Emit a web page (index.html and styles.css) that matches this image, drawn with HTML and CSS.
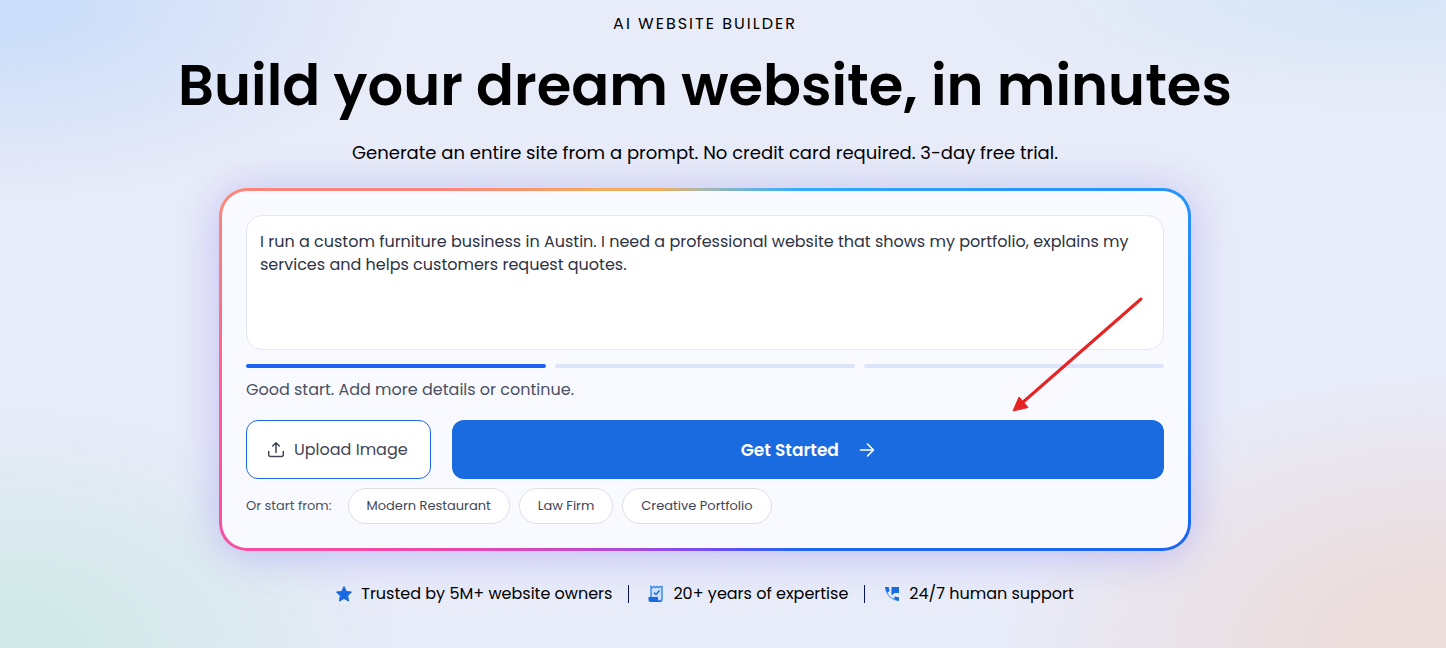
FILE: index.html
```
<!DOCTYPE html>
<html lang="en">
<head>
    <meta charset="UTF-8">
    <meta name="viewport" content="width=device-width, initial-scale=1.0">
    <title>AI Website Builder</title>
    <link rel="stylesheet" href="styles.css">
</head>
<body>
    <main class="hero">
        <p class="eyebrow">AI WEBSITE BUILDER</p>
        <h1>Build your dream website, in minutes</h1>
        <p class="subtitle">Generate an entire site from a prompt. No credit card required. 3-day free trial.</p>

        <form class="card">
            <textarea class="prompt" aria-label="Describe your website">I run a custom furniture business in Austin. I need a professional website that shows my portfolio, explains my services and helps customers request quotes.</textarea>

            <div class="progress">
                <span class="step active"></span>
                <span class="step"></span>
                <span class="step"></span>
            </div>
            <p class="hint">Good start. Add more details or continue.</p>

            <div class="actions">
                <button type="button" class="upload">
                    <svg width="18" height="18" viewBox="0 0 18 18" fill="none" stroke="currentColor" stroke-width="1.5" stroke-linecap="round" stroke-linejoin="round">
                        <path d="M9 11.500V2M5.700 5L9 1.700l3.300 3.300M1.700 10.500v3.300a1.700 1.700 0 0 0 1.700 1.700h11.200a1.700 1.700 0 0 0 1.700-1.700v-3.300"/>
                    </svg>
                    Upload Image
                </button>
                <button type="submit" class="submit">
                    Get Started
                    <svg width="16" height="16" viewBox="0 0 16 16" fill="none" stroke="currentColor" stroke-width="1.6" stroke-linecap="round" stroke-linejoin="round">
                        <path d="M1.500 8h13M8.500 2l6 6-6 6"/>
                    </svg>
                </button>
            </div>

            <div class="examples">
                <span class="examples-label">Or start from:</span>
                <button type="button" class="chip">Modern Restaurant</button>
                <button type="button" class="chip">Law Firm</button>
                <button type="button" class="chip">Creative Portfolio</button>
            </div>

            <svg class="pointer" width="132" height="116" viewBox="0 0 132 116">
                <path d="M129 2L10 106" stroke="#e82323" stroke-width="3" stroke-linecap="round"/>
                <path d="M1 114l6-14 4.500 5 4.500 5.500z" fill="#e82323" stroke="#e82323"/>
            </svg>
        </form>

        <ul class="trust">
            <li>
                <svg width="16" height="18" viewBox="1 0 16 18" fill="#1a6be0" stroke="#1a6be0" stroke-linejoin="round">
                    <path d="M9 1.500l2.300 4.900 5.200.7-3.800 3.700.9 5.300L9 13.500l-4.600 2.600.9-5.300-3.800-3.700 5.200-.7z"/>
                </svg>
                Trusted by 5M+ website owners
            </li>
            <li>
                <svg width="16" height="18" viewBox="0 0 16 18" fill="none">
                    <path d="M3 12V1.500l1.500 1L6 1.500l1.500 1L9 1.500l1.500 1 1.500-1 1.500 1 .5-.5V14a2.500 2.500 0 0 1-2.500 2.500" fill="#cfe2fb" stroke="#3d8cf0" stroke-width="1.500"/>
                    <path d="M6 7.500l2 2 3.500-4" stroke="#1a6be0" stroke-width="1.500"/>
                    <path d="M.5 12H10v2a1.500 1.500 0 0 0 3 0v3H2.500a2 2 0 0 1-2-2z" fill="#1a6be0"/>
                </svg>
                20+ years of expertise
            </li>
            <li>
                <svg width="16" height="16" viewBox="0 0 16 16">
                    <path d="M1 1h3.500l1 4-2 2a12 12 0 0 0 5.500 5.500l2-2 4 1V15C7.500 15 1 8.500 1 1z" fill="#559df5"/>
                    <path d="M1 1h3.500l1 4-2.700 1.200zM11 10.500l4 1V15l-4-1.500zM7.500 1H15v6h-4.500L7.500 9.500z" fill="#1a6be0"/>
                </svg>
                24/7 human support
            </li>
        </ul>
    </main>
</body>
</html>
```

FILE: styles.css
```
* {
    box-sizing: border-box;
}
body {
    margin: 0;
    min-height: 100vh;
    font-family: Poppins, Inter, sans-serif;
    color: #000;
    background:
        radial-gradient(ellipse 400px 200px at 0 0, #cbddf9 15%, transparent),
        radial-gradient(ellipse 420px 110px at 96% 0, #d6e6f7, transparent),
        radial-gradient(ellipse 400px 240px at 0 100%, #d3e9e9 20%, transparent),
        radial-gradient(ellipse 440px 270px at 100% 100%, #ecdcdb 20%, transparent),
        #e8ebf8;
}
.hero {
    display: flex;
    flex-direction: column;
    align-items: center;
    padding: 12px 36px 40px 0;
}
.eyebrow {
    margin: 0;
    font-size: 16px;
    line-height: 24px;
    letter-spacing: 2px;
}
h1 {
    margin: 16px 0 0;
    font-size: 56px;
    font-weight: 600;
    line-height: 68px;
    text-align: center;
}
.subtitle {
    margin: 20px 0 0;
    font-size: 18px;
    line-height: 26px;
}
.card {
    position: relative;
    width: 100%;
    max-width: 972px;
    margin-top: 22px;
    padding: 24px;
    border: 3px solid transparent;
    border-radius: 28px;
    background:
        linear-gradient(#f9faff, #f9faff) padding-box,
        conic-gradient(#a3b8b0, #33aeff 28deg, #2490f8 75deg, #1b66f5 110deg, #1b66f5 150deg, #6a4ff8 175deg, #b44ad8 208deg, #ec48ab 235deg, #ff5a97 265deg, #ff8678 290deg, #ff8678 305deg, #f5ac5a 330deg, #f5ac5a 345deg, #a3b8b0) border-box;
    box-shadow: 0 4px 40px rgba(110, 90, 240, 0.32);
}
.prompt {
    display: block;
    width: 100%;
    height: 135px;
    padding: 14px 13px;
    border: 1px solid #e4e8f4;
    border-radius: 16px;
    background: #fff;
    color: #2d3344;
    font-family: inherit;
    font-size: 16px;
    line-height: 23px;
    resize: none;
}
.progress {
    display: flex;
    gap: 9px;
    margin-top: 14px;
}
.step {
    flex: 1;
    height: 4px;
    border-radius: 2px;
    background: #dce5fa;
}
.step.active {
    background: #1b62f5;
}
.hint {
    margin: 10px 0 18px;
    color: #4b5063;
    font-size: 16px;
    line-height: 24px;
}
button {
    font-family: inherit;
    cursor: pointer;
}
.actions {
    display: flex;
    gap: 21px;
}
.upload,
.submit {
    display: flex;
    align-items: center;
    justify-content: center;
    height: 59px;
    border-radius: 12px;
}
.upload {
    gap: 9px;
    padding: 0 22px 0 20px;
    border: 1px solid #1a6be0;
    background: #fff;
    color: #3f4557;
    font-size: 16px;
}
.submit {
    flex: 1;
    gap: 20px;
    border: 0;
    background: #1a6be0;
    color: #fff;
    font-size: 17px;
    font-weight: 600;
}
.examples {
    display: flex;
    align-items: center;
    gap: 9px;
    margin-top: 9px;
}
.examples-label {
    margin-right: 7px;
    color: #4b5063;
    font-size: 13px;
}
.chip {
    height: 36px;
    padding: 0 18px;
    border: 1px solid #dddfe8;
    border-radius: 18px;
    background: #fff;
    color: #3f4557;
    font-size: 13px;
}
.pointer {
    position: absolute;
    top: 106px;
    right: 44px;
    pointer-events: none;
}
.trust {
    display: flex;
    margin: 31px 0 0;
    padding: 0;
    list-style: none;
    font-size: 16px;
    line-height: 24px;
}
.trust li {
    display: flex;
    align-items: center;
    gap: 9px;
}
.trust li + li::before {
    content: "";
    width: 1px;
    height: 18px;
    margin: 0 10px 0 16px;
    background: #0a1550;
}
```
